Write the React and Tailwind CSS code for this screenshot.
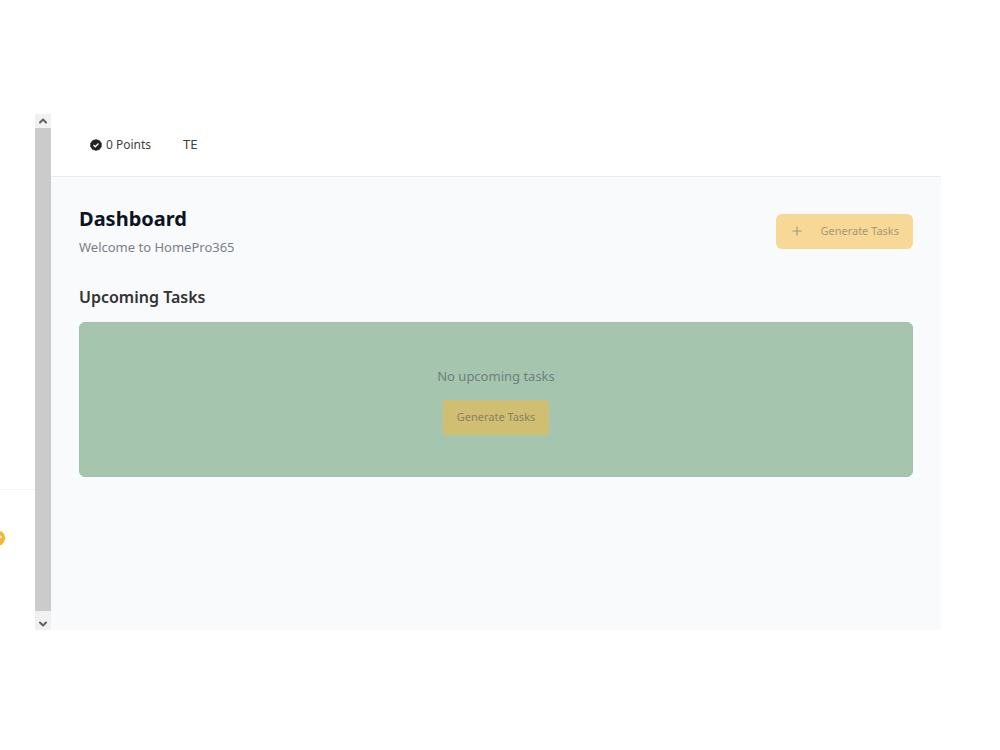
import React from 'react';
import { ChevronDown, ChevronUp, Plus } from 'lucide-react';

function Sidebar() {
  return (
    <aside className="w-[35px] shrink-0 flex flex-col overflow-hidden">
      <div className="flex-1" />
      <div className="h-[141px] border-t border-[#f3f3f4] pt-10">
        <svg className="w-2 h-4" viewBox="0 0 8 16" aria-hidden="true">
          <path d="M0 1.5 L1.5 1.3 L4 4 L5.3 8 L4 12 L1.5 15 L0 15 Z" fill="#fbb430" />
          <path d="M0 5.6 L2 6.2 L1.4 8.4 L0 8 Z" fill="#fff" />
        </svg>
      </div>
    </aside>
  );
}

function ScrollRail() {
  return (
    <div className="w-4 shrink-0 flex flex-col bg-[#f1f1f1] text-[#606060]">
      <button type="button" aria-label="Scroll up" className="h-[14px] flex items-center justify-center">
        <ChevronUp className="w-3 h-3" strokeWidth={4} />
      </button>
      <div className="flex-1 bg-[#cbcbcb]" />
      <button type="button" aria-label="Scroll down" className="h-[19px] flex items-center justify-center pt-1.5">
        <ChevronDown className="w-3 h-3" strokeWidth={4} />
      </button>
    </div>
  );
}

function PointsBadge() {
  return (
    <svg className="w-3 h-3" viewBox="0 0 24 24" aria-hidden="true">
      <path
        d="M12 .8 15.2 2.2 18.8 2.8 20.9 5.8 23 8.6 22.8 12 23 15.4 20.9 18.2 18.8 21.2 15.2 21.8 12 23.2 8.8 21.8 5.2 21.2 3.1 18.2 1 15.4 1.2 12 1 8.6 3.1 5.8 5.2 2.8 8.8 2.2Z"
        fill="#222"
        stroke="#222"
        strokeLinejoin="round"
      />
      <path d="M7 12 10.5 15.5 17 9" fill="none" stroke="#fff" strokeWidth="2.6" />
    </svg>
  );
}

export default function App() {
  return (
    <div className="min-h-screen bg-white flex pt-[114px] pb-[120px] pr-[59px] font-['Noto_Sans','Open_Sans',sans-serif]">
      <Sidebar />
      <ScrollRail />

      <div className="flex-1 min-w-0 flex flex-col bg-[#f8fafc]">
        <header className="h-[63px] bg-white border-b border-[#ececee] flex items-center gap-8 px-[39px] text-[#3f3f3f]">
          <div className="flex items-center gap-1 text-xs">
            <PointsBadge />
            <span>0 Points</span>
          </div>
          <span className="text-[13px]">TE</span>
        </header>

        <main className="px-7 pt-7">
          <div className="flex items-center justify-between">
            <div>
              <h1 className="text-xl leading-7 font-bold text-[#0b1324]">Dashboard</h1>
              <p className="mt-1 text-[13px] leading-5 text-[#7b8088]">Welcome to HomePro365</p>
            </div>
            <button
              type="button"
              disabled
              className="h-[35px] px-[14px] rounded-md bg-[#f8d896] text-[#a39878] text-[11px] flex items-center gap-4"
            >
              <Plus className="w-[14px] h-[14px]" strokeWidth={2} />
              Generate Tasks
            </button>
          </div>

          <section className="mt-7">
            <h2 className="text-base leading-6 font-semibold text-[#333]">Upcoming Tasks</h2>
            <div className="mt-[13px] rounded-md border border-[#a0c1aa] bg-[#a6c5ae] py-[41px] flex flex-col items-center">
              <p className="text-[13px] leading-6 text-[#6f8080]">No upcoming tasks</p>
              <button
                type="button"
                disabled
                className="mt-3 h-[35px] px-[14px] rounded bg-[#d0be72] text-[#86835f] text-[11px]"
              >
                Generate Tasks
              </button>
            </div>
          </section>
        </main>
      </div>
    </div>
  );
}
